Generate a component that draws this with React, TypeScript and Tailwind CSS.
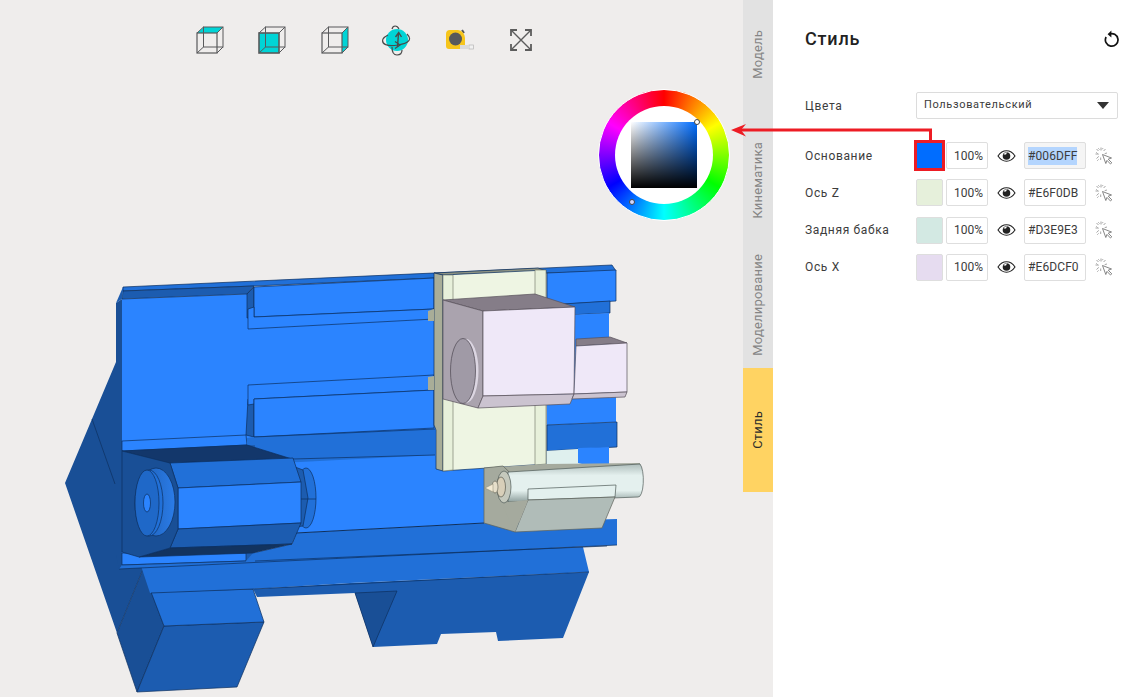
import React from "react";

const line = "#0d2f5e";
const P = ({ p, f, s = line, w = 0.7 }: { p: string; f: string; s?: string; w?: number }) => (
  <polygon points={p} fill={f} stroke={s} strokeWidth={w} strokeLinejoin="round" />
);

function Machine() {
  const bright = "#2b84ff";
  const mid = "#2170d8";
  const midDark = "#1c5cb0";
  const dark = "#194f96";
  const none = "none";
  return (
    <svg className="absolute left-0 top-0" width="743" height="697" viewBox="0 0 743 697">
      <defs>
        <linearGradient id="cyl" x1="0" y1="0" x2="0" y2="1">
          <stop offset="0" stopColor="#aebdbb" />
          <stop offset="0.3" stopColor="#e4f0ee" />
          <stop offset="0.7" stopColor="#e4f0ee" />
          <stop offset="1" stopColor="#8e9f9d" />
        </linearGradient>
        <linearGradient id="disc" x1="0" y1="0" x2="1" y2="0">
          <stop offset="0" stopColor="#1c5cb0" />
          <stop offset="1" stopColor="#2b7ce8" />
        </linearGradient>
      </defs>
      {/* rear wedge */}
      <P p="116,362 65,483 117,633 143,569 146,564 119,564" f={dark} s={none} />
      <line x1="92" y1="419" x2="115" y2="484" stroke={line} strokeWidth="0.7" />
      {/* foot */}
      <P p="143,569 164,626 137,692 117,633" f={dark} />
      <P p="164,626 264,622 237,687 137,692" f={midDark} />
      <P p="151,592 253,589 264,622 164,626" f={mid} />
      {/* lower bed */}
      <P p="350,583 589,572 563,638 498,641 496,632 441,634 437,644 373,647 355,593 257,597 253,589" f={midDark} s={none} />
      <P p="355,593 397,591 373,647" f={dark} />
      <P p="141,566 350,555 583,547 589,572 350,583 253,589 150,593" f={mid} s={none} />
      <line x1="151" y1="593" x2="253" y2="589" stroke={line} strokeWidth="0.7" />
      <line x1="253" y1="589" x2="589" y2="572" stroke={line} strokeWidth="0.7" />
      {/* side strip and plate */}
      <P p="116,303 122,299 122,569 119,569 116,555" f={dark} s={none} />
      <P p="122,299 247,294 254,287 440,278 440,470 484,468 484,523 296,533 253,553 246,561 122,565" f={bright} s={none} />
      <P p="123,287 612,265 616,271 547,273 254,286 123,291" f={mid} />
      <P p="123,291 254,286 247,294 122,299" f={midDark} />
      <P p="116,303 123,287 123,291 122,299" f={midDark} s={none} />
      {/* left vertical step at the rails */}
      <P p="247,294 254,287 254,317 247,318" f={midDark} />
      <P p="248,399 254,399 254,437 246,435" f={midDark} />
      {/* upper rail */}
      <P p="254,287 434,278 434,309 254,317" f={bright} />
      <P p="248,329 434,319 434,309 254,317 254,307 248,309" f={bright} />
      {/* lower rail */}
      <P p="248,385 434,375 434,390 254,399 254,404 248,405" f={bright} />
      <P p="254,399 434,390 434,428 254,437" f={bright} />
      {/* plate lower strips */}
      <P p="122,441 246,435 247,445 122,451" f={bright} />
      <P p="247,438 254,437 435,429 435,455 300,462 247,465" f={mid} s={none} />
      <line x1="254" y1="437" x2="435" y2="429" stroke={line} strokeWidth="0.7" />
      <line x1="293" y1="459" x2="435" y2="455" stroke={line} strokeWidth="0.7" />
      <P p="246,445 255,445 255,562 246,561" f={midDark} s={none} />
      <P p="122,553 246,553 246,561 122,565" f={bright} />
      {/* bottom plate band */}
      <P p="119,569 122,565 246,561 253,553 292,544 296,533 484,523 617,519 617,545 350,557" f={mid} s={none} />
      <line x1="119" y1="569" x2="617" y2="545" stroke={line} strokeWidth="0.7" />
      <line x1="255" y1="561" x2="607" y2="546" stroke={line} strokeWidth="0.7" />
      <line x1="296" y1="533" x2="484" y2="523" stroke={line} strokeWidth="1" />
      <line x1="122" y1="565" x2="246" y2="561" stroke={line} strokeWidth="0.7" />
      {/* right part */}
      <P p="547,273 616,270 616,301 547,305" f={bright} />
      <P p="547,305 610,301 610,313 547,316" f={mid} />
      <P p="547,316 609,313 609,400 547,403" f={bright} s={none} />
      <P p="547,400 616,397 616,422 547,425" f={bright} s={none} />
      <P p="547,425 617,422 617,447 547,451" f={mid} />
      <P p="545,451 578,449 578,470 545,470" f="#dff0ee" s={none} />
      <P p="578,448 609,447 609,465 590,466 578,463" f={bright} s={none} />
      {/* spindle rear */}
      <ellipse cx="306" cy="498" rx="10" ry="30" fill={mid} stroke={line} strokeWidth="0.7" />
      <P p="295,467 303,470 308,498 303,526 295,527" f={midDark} />
      <line x1="301" y1="499" x2="316" y2="499" stroke={line} strokeWidth="0.7" />
      {/* hex housing */}
      <P p="122,451 247,445 292,459 168,463" f="#13376b" />
      <P p="170,463 293,458 301,482 178,488" f={mid} />
      <P p="178,488 301,482 301,523 178,529" f={bright} />
      <P p="178,529 301,523 292,544 170,548" f={midDark} />
      <P p="139,557 170,548 292,544 253,553" f="#12335f" />
      <P p="122,451 170,463 178,488 178,529 170,548 139,557 122,552" f={dark} />
      <ellipse cx="156" cy="502" rx="19" ry="34" fill="url(#disc)" stroke={line} strokeWidth="0.7" />
      <ellipse cx="149" cy="503" rx="14" ry="33" fill={mid} stroke={line} strokeWidth="0.7" />
      <ellipse cx="147" cy="503" rx="12" ry="33" fill="#1f68c8" stroke={line} strokeWidth="0.7" />
      <ellipse cx="147" cy="503" rx="3.5" ry="9" fill={bright} stroke={line} strokeWidth="0.7" />
      {/* slide */}
      <P p="434,273 538,268 546,271 443,275" f="#8f9484" />
      <P p="434,273 443,275 443,471 436,469 436,430 434,425" f="#a8ad98" />
      <P p="428,311 434,309 434,321 428,321" f="#a8ad98" s={none} />
      <P p="428,377 434,376 434,390 428,390" f="#a8ad98" s={none} />
      <P p="443,275 546,270 546,464 443,471" f="#eef5e3" />
      <P p="535,270 546,270 546,464 535,465" f="#e7f0da" s="#7b8270" />
      <P p="443,275 453,275 453,470 443,471" f="#e7f0da" s="#7b8270" />
      {/* tail stock */}
      <P p="484,468 546,464 640,463 640,466 508,473" f="#a5aa9e" s={none} />
      <P p="484,468 503,466 528,490 515,532 484,523" f="#a5aa9e" s="#5d625a" />
      <path d="M508 472 L640 464 A5 17 0 0 1 638 497 L508 502 Z" fill="url(#cyl)" stroke="#4f5a58" strokeWidth="0.7" />
      <P p="528,489 616,485 615,497 528,500" f="#e3f0ee" s="#4f5a58" />
      <P p="528,500 615,497 602,528 515,532" f="#b0bcb8" s="#5d625a" />
      <P p="508,502 528,500 515,532 502,505" f="#a5aa9e" s="none" />
      <ellipse cx="504" cy="487" rx="7" ry="16" fill="#c5c9bd" stroke="#4f5a58" strokeWidth="0.7" />
      <ellipse cx="501" cy="487" rx="4.5" ry="10" fill="#d8cfb9" stroke="#5a5a4f" strokeWidth="0.7" />
      <ellipse cx="495" cy="487" rx="3" ry="6" fill="#e6dfca" stroke="#5a5a4f" strokeWidth="0.6" />
      <P p="485,488 493,484 493,492" f="#f3ead3" s="#8b8672" w={0.5} />
      {/* carriage */}
      <P p="443,300 535,294 575,307 483,311" f="#857d88" s="#57505a" />
      <P p="443,300 483,311 483,396 478,408 443,399" f="#aaa3ae" s="#57505a" />
      <P p="483,311 575,307 574,394 483,396" f="#efe8f8" s="#57505a" />
      <P p="483,396 574,394 570,404 478,408" f="#cbc3d0" s="#57505a" />
      <P p="576,339 610,337 627,343 576,346" f="#857d88" s="#57505a" />
      <P p="576,346 627,343 627,392 574,394" f="#efe8f8" s="#57505a" />
      <P p="574,394 627,392 625,397 572,399" f="#cbc3d0" s="#57505a" />
      <ellipse cx="466" cy="371" rx="12.5" ry="32" fill="#dcd6e2" />
      <ellipse cx="463" cy="371" rx="12.5" ry="32.5" fill="#a09aa6" stroke="#4d4852" strokeWidth="0.7" />
    </svg>
  );
}

function Cube({ face }: { face: "top" | "front" | "right" }) {
  return (
    <svg width="28" height="28" viewBox="0 0 28 28" fill="none">
      {face === "top" && <polygon points="1,7 8,1 27,1 21,7" fill="#00d4d6" />}
      {face === "front" && <rect x="1" y="7" width="20" height="20" fill="#00d4d6" />}
      {face === "right" && <polygon points="21,7 27,1 27,21 21,27" fill="#00d4d6" />}
      <g stroke="#58595b" strokeWidth="1">
        <rect x="7.5" y="1" width="19.5" height="20" />
        <line x1="1" y1="7" x2="7.5" y2="1" />
        <line x1="21" y1="7" x2="27" y2="1" />
        <line x1="1" y1="27" x2="7.5" y2="21" />
        <line x1="21" y1="27" x2="27" y2="21" />
      </g>
      <rect x="1" y="7" width="20" height="20" stroke="#58595b" strokeWidth={face === "front" ? 1.6 : 1.2} />
    </svg>
  );
}

function Orbit() {
  return (
    <svg width="32" height="32" viewBox="0 0 32 32" fill="none" stroke="#4a4a4a" strokeWidth="1.2">
      <circle cx="16" cy="16" r="11" fill="#00d4d6" stroke="none" />
      <path d="M26 10 C31 15 29 19 17 21 C6 23 0 20 2 15 C3 13 5 12 7 11" />
      <path d="M11 5 C12 1 16 1 18 5" />
      <path d="M11 23 C11 28 13 31 16 31 C19 31 21 29 21 26" />
      <path d="M16.5 23 L17.5 9 M14.5 13 L17.7 8.5 L20.5 13" strokeWidth="1.4" />
      <path d="M14 17.5 L19 21 L14 24.5" strokeWidth="1.3" />
    </svg>
  );
}

function Tape() {
  return (
    <svg width="30" height="24" viewBox="0 0 30 24" fill="none">
      <rect x="24" y="17" width="4.5" height="4" fill="#f1f1f1" stroke="#b5b5b5" strokeWidth="0.7" />
      <rect x="15" y="17" width="9" height="4" fill="#dadada" />
      <path d="M17 2 L19 5" stroke="#57595b" strokeWidth="2" />
      <path d="M5 2 H13 A8 8 0 0 1 20 10 V17 H15 V21 H4 A3 3 0 0 1 1 18 V6 A4 4 0 0 1 5 2 Z" fill="#f6c51b" />
      <circle cx="10.5" cy="11" r="6.5" fill="#57595b" />
    </svg>
  );
}

function Expand() {
  return (
    <svg width="24" height="24" viewBox="0 0 24 24" fill="none" stroke="#5c5c5c" strokeWidth="1.4">
      <path d="M2 2 L22 22 M22 2 L2 22" />
      <path d="M2 8 V2 H8 M16 2 H22 V8 M22 16 V22 H16 M8 22 H2 V16" strokeWidth="1.8" />
    </svg>
  );
}

function Eye() {
  return (
    <svg width="19" height="12" viewBox="0 0 19 12" fill="none">
      <path d="M1 6 C4 1.5 7 .8 9.5 .8 C12 .8 15 1.5 18 6 C15 10.5 12 11.2 9.5 11.2 C7 11.2 4 10.5 1 6 Z" stroke="#222" strokeWidth="1.1" />
      <circle cx="9.5" cy="6" r="3.8" fill="#222" />
      <path d="M6.5 4.4 A3.6 3.6 0 0 1 10 2.6 L9 4.6 Z" fill="#fff" />
    </svg>
  );
}

function MagicCursor() {
  return (
    <svg width="18" height="18" viewBox="0 0 18 18" fill="none" stroke="#9a9a9a" strokeWidth="0.9">
      <path d="M6 0.5 V3.5 M1.5 2 L3.5 4 M0.5 7 H3.5 M1.5 11.5 L3.8 9.4 M10.5 2 L8.6 4 M5.7 13 V10.5 M12 6 L9.7 6.6" />
      <path d="M1 5 L4 8 M8 1 L7 3 M3 1 L5 3 M2 14 L4 12" strokeDasharray="1 1" />
      <path d="M7.5 7.5 L16.5 11 L13.2 12.2 L16.8 15.8 L15.5 17 L12 13.4 L10.8 16.5 Z" fill="#fff" stroke="#777" />
    </svg>
  );
}

function Wheel() {
  return (
    <div className="absolute left-[598px] top-[89px] flex h-[132px] w-[132px] items-center justify-center rounded-full border border-white bg-[conic-gradient(#ff0000,#ffff00,#00ff00,#00ffff,#0000ff,#ff00ff,#ff0000)]">
      <div className="flex h-[98px] w-[98px] items-center justify-center rounded-full bg-white">
        <div className="relative h-[66px] w-[66px] bg-[linear-gradient(to_top,#000,rgba(0,0,0,0)),linear-gradient(to_right,#fff,#006dff)]">
          <span className="absolute right-[-3px] top-[-3px] h-[6px] w-[6px] rounded-full border border-[#444] bg-white" />
        </div>
      </div>
      <span className="absolute left-[30px] top-[109px] h-[6px] w-[6px] rounded-full border border-[#444] bg-[#cfd6ff]" />
    </div>
  );
}

const tabs = [
  { t: "Модель", h: "h-[108px]" },
  { t: "Кинематика", h: "h-[144px]" },
  { t: "Моделирование", h: "h-[116px] pb-[10px]" },
];

const rows = [
  { n: "Основание", c: "#006DFF", sel: true },
  { n: "Ось Z", c: "#E6F0DB" },
  { n: "Задняя бабка", c: "#D3E9E3" },
  { n: "Ось X", c: "#E6DCF0" },
];

function Row({ n, c, sel }: { n: string; c: string; sel?: boolean }) {
  return (
    <div className="flex h-[27px] items-center">
      <div className="w-[111px] text-[12px] tracking-[0.65px] text-[#3c3c3c]">{n}</div>
      {sel ? (
        <div className="mx-[-2px] h-[31px] w-[31px] shrink-0 border-[3px] border-[#ed1c24] bg-[#006dff]" />
      ) : (
        <div className="h-[27px] w-[27px] shrink-0 rounded-[2px] border border-[#dedede]" style={{ backgroundColor: c }} />
      )}
      <div className="ml-[3px] flex h-[27px] w-[42px] items-center justify-end rounded-[2px] border border-[#dedede] pr-[4px] text-[12px] text-[#3c3c3c]">100%</div>
      <div className="flex w-[36px] justify-center">
        <Eye />
      </div>
      <div className={`flex h-[27px] w-[62px] items-center rounded-[2px] border border-[#dedede] pl-[3px] text-[12px] tracking-[0.1px] text-[#3c3c3c] ${sel ? "bg-[#f5f5f5]" : ""}`}>
        <span className={sel ? "bg-[#b4d5fe]" : ""}>{c}</span>
      </div>
      <div className="ml-[9px] flex">
        <MagicCursor />
      </div>
    </div>
  );
}

export default function App() {
  return (
    <div className="relative flex h-[697px] w-[1147px] overflow-hidden bg-[#efedec] font-['Roboto',sans-serif]">
      <div className="relative h-full w-[743px] shrink-0">
        <Machine />
        <div className="relative flex items-center pl-[196px] pt-[24px]">
          <Cube face="top" />
          <div className="ml-[34px]"><Cube face="front" /></div>
          <div className="ml-[35px]"><Cube face="right" /></div>
          <div className="ml-[32px]"><Orbit /></div>
          <div className="ml-[32px]"><Tape /></div>
          <div className="ml-[34px]"><Expand /></div>
        </div>
        <Wheel />
      </div>
      <div className="flex w-[30px] shrink-0 flex-col">
        {tabs.map((x) => (
          <div key={x.t} className={`flex items-center justify-center bg-[#e2e2e2] ${x.h}`}>
            <span className="rotate-180 text-[13px] tracking-[0.2px] text-[#858585] [writing-mode:vertical-rl]">{x.t}</span>
          </div>
        ))}
        <div className="flex h-[124px] items-center justify-center bg-[#ffd362]">
          <span className="rotate-180 text-[13px] tracking-[0.2px] text-[#2b2b2b] [writing-mode:vertical-rl]">Стиль</span>
        </div>
      </div>
      <div className="flex-1 bg-white pl-[32px] pr-[27px] pt-[27px]">
        <div className="flex h-[22px] items-center justify-between">
          <h1 className="text-[18px] font-medium tracking-[0.8px] text-[#222]">Стиль</h1>
          <svg className="mt-[2px]" width="16" height="18" viewBox="0 0 16 18" fill="none" stroke="#111" strokeWidth="1.7">
            <path d="M5 4.2 A6.3 6.3 0 1 1 2.1 7" />
            <path d="M7.4 0.6 L3.6 4.2 L7.4 7.4" fill="#111" stroke="none" />
          </svg>
        </div>
        <div className="mt-[43px] flex h-[27px] items-center">
          <div className="w-[111px] text-[12px] tracking-[0.65px] text-[#3c3c3c]">Цвета</div>
          <div className="flex h-[27px] w-[202px] items-center justify-between rounded-[2px] border border-[#dcdcdc] pl-[7px] pr-[8px] text-[11px] tracking-[0.65px] text-[#3c3c3c]">
            <span>Пользовательский</span>
            <span className="h-0 w-0 border-x-[6px] border-t-[7px] border-x-transparent border-t-[#333]" />
          </div>
        </div>
        <div className="mt-[23px] flex flex-col gap-[10.3px]">
          {rows.map((r) => (
            <Row key={r.n} {...r} />
          ))}
        </div>
      </div>
      <svg className="pointer-events-none absolute left-0 top-0" width="1147" height="697" fill="none">
        <path d="M930.5 142 V130 H738" stroke="#ed1c24" strokeWidth="3" />
        <path d="M731 130 L746 124 L741 130 L746 136.5 Z" fill="#ed1c24" />
      </svg>
    </div>
  );
}
